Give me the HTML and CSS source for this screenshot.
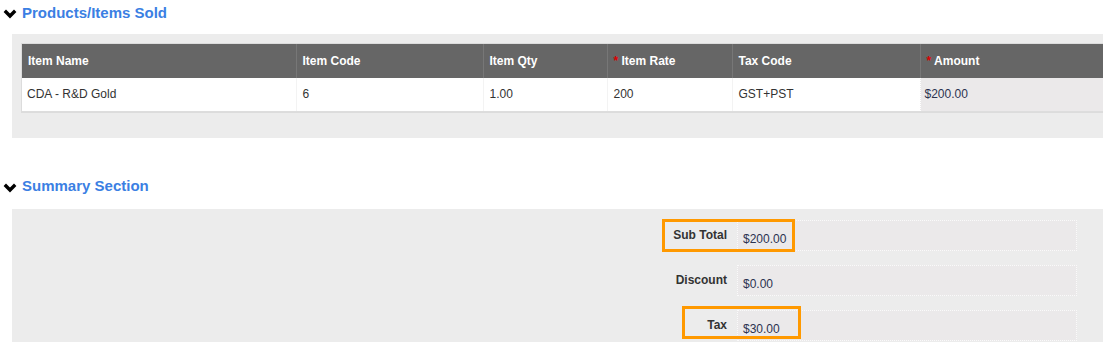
FILE: index.html
```html
<!doctype html>
<html lang="en">
<head>
    <meta charset="UTF-8">
    <title>Sales Receipt</title>
    <link rel="stylesheet" href="styles.css">
</head>
<body>
    <div class="section">
        <h2 class="sec-title">
            <svg class="chev" width="14" height="10" viewBox="0 0 14 10"><polyline points="1.8,1.8 7,7 12.2,1.8" fill="none" stroke="#000" stroke-width="3.4"/></svg>
            Products/Items Sold
        </h2>
        <div class="panel items-panel">
            <table class="items">
                <thead>
                    <tr>
                        <th class="c-name">Item Name</th>
                        <th class="c-code">Item Code</th>
                        <th class="c-qty">Item Qty</th>
                        <th class="c-rate"><span class="req">*</span> Item Rate</th>
                        <th class="c-tax">Tax Code</th>
                        <th class="c-amt"><span class="req">*</span> Amount</th>
                    </tr>
                </thead>
                <tbody>
                    <tr>
                        <td>CDA - R&amp;D Gold</td>
                        <td>6</td>
                        <td>1.00</td>
                        <td>200</td>
                        <td>GST+PST</td>
                        <td class="ro">$200.00</td>
                    </tr>
                </tbody>
            </table>
        </div>
    </div>

    <div class="section summary">
        <h2 class="sec-title">
            <svg class="chev" width="14" height="10" viewBox="0 0 14 10"><polyline points="1.8,1.8 7,7 12.2,1.8" fill="none" stroke="#000" stroke-width="3.4"/></svg>
            Summary Section
        </h2>
        <div class="panel sum-panel">
            <div class="sum-row">
                <label>Sub Total</label>
                <div class="field">$200.00</div>
                <span class="mark mark-sub"></span>
            </div>
            <div class="sum-row">
                <label>Discount</label>
                <div class="field">$0.00</div>
            </div>
            <div class="sum-row">
                <label>Tax</label>
                <div class="field">$30.00</div>
                <span class="mark mark-tax"></span>
            </div>
        </div>
    </div>
</body>
</html>
```

FILE: styles.css
```css
/*reset*/
*{
    margin:0;
    padding:0;
    box-sizing: border-box;
}
html, body{
    overflow: hidden;
}
body{
    width: 1103px;
    height: 342px;
    font-family: "Liberation Sans", Arial, sans-serif;
    font-size: 12px;
    color: #333;
    background: #fff;
}

.sec-title{
    display: flex;
    align-items: center;
    height: 24px;
    padding-left: 3px;
    font-size: 15px;
    font-weight: bold;
    color: #3b7fe3;
}
.sec-title .chev{
    margin-right: 5px;
    margin-top: 4px;
}

.panel{
    margin-left: 12px;
    width: 1110px;
    background: #ececec;
}

.items-panel{
    margin-top: 10px;
    padding: 10px 0 26px 10px;
}
.items{
    border-collapse: collapse;
    width: 1090px;
    background: #fff;
    box-shadow: 0 0 0 1px #dcdcdc;
}
.items th{
    height: 34px;
    background: #666;
    color: #fff;
    font-weight: bold;
    text-align: left;
    padding: 0 6px;
    border-left: 1px solid #777;
}
.items th:first-child{
    border-left: none;
}
.items td{
    height: 33px;
    padding: 0 6px;
    border-bottom: 1px solid #ddd;
    border-left: 1px solid #f3f3f3;
}
.items td:first-child{
    border-left: none;
    padding-left: 5px;
}
.items td.ro{
    background: #ebe9ea;
    border-left: 1px dotted #fff;
    padding-left: 4px;
    color: #2b3350;
}
.req{
    color: #d00;
}
.c-name{ width: 274px; }
.c-code{ width: 187px; }
.c-qty{ width: 124px; }
.c-rate{ width: 125px; }
.c-tax{ width: 188px; }

.summary{
    margin-top: 36px;
}
.sum-panel{
    margin-top: 11px;
    height: 140px;
    padding-top: 11px;
}
.sum-row{
    position: relative;
    display: flex;
    align-items: flex-start;
    gap: 10px;
    margin-bottom: 14px;
}
.sum-row label{
    width: 715px;
    text-align: right;
    font-weight: bold;
    color: #333;
    padding-top: 8px;
}
.field{
    width: 340px;
    height: 31px;
    padding: 11px 0 0 5px;
    background: #ebe9ea;
    border: 1px dotted #fafafa;
    color: #2b3350;
}

.mark{
    position: absolute;
    border: 3px solid #ff9900;
}
.mark-sub{
    left: 650px;
    top: -1px;
    width: 133px;
    height: 33px;
}
.mark-tax{
    left: 670px;
    top: -4px;
    width: 119px;
    height: 33px;
}
```
